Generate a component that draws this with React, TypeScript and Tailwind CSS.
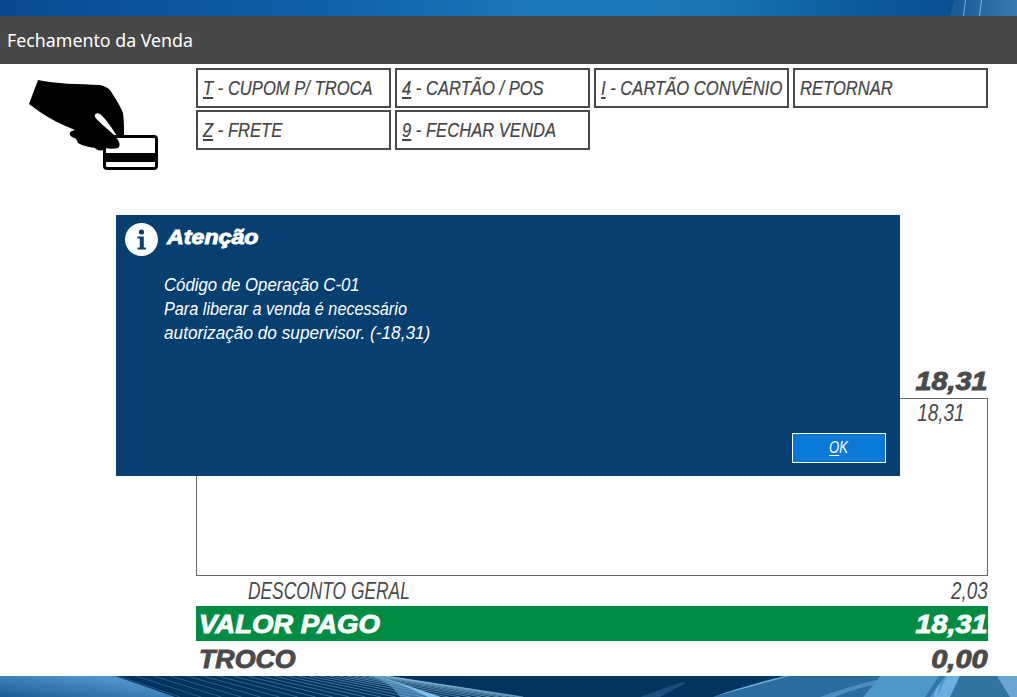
const light = "inline-block font-['Liberation_Sans',sans-serif] italic"
const heavy = "inline-block font-['Liberation_Sans',sans-serif] font-bold italic [-webkit-text-stroke:0.9px_currentColor]"

const ACTIONS = [
  { key: 'T', label: ' - CUPOM P/ TROCA' },
  { key: '4', label: ' - CARTÃO / POS' },
  { key: 'I', label: ' - CARTÃO CONVÊNIO' },
  { key: '', label: 'RETORNAR' },
  { key: 'Z', label: ' - FRETE' },
  { key: '9', label: ' - FECHAR VENDA' },
]

function HandCard() {
  return (
    <svg width="132" height="94" viewBox="28 78 132 94" className="shrink-0">
      <rect x="104.5" y="136.5" width="52" height="32" rx="2.5" fill="#fff" stroke="#000" strokeWidth="3" />
      <rect x="104" y="153" width="53" height="9" fill="#000" />
      <path
        d="M38 80 C55 84 80 84 100 85 C105 86 108 88 110 90 C115 98 120 105 123 113 C124 120 124 128 124 136 L117 136 C112 128 105 118 100 114 C97 112 94 114 95 117 C101 125 112 131 118 140 C120 143 120 147 118 148 C114 149 110 149 105 148 L104 150 C100 151 96 150 95 148 C89 147 83 146 78 143 C77 140 76 138 72 137 C69 135 69 132 72 131 L75 130 C62 125 50 119 40 112 L29 104 Z"
        fill="#000"
      />
    </svg>
  )
}

function TopBand() {
  return (
    <div className="relative h-4 overflow-hidden bg-[linear-gradient(90deg,#084a92_0%,#0f5ea8_30%,#1a7abc_55%,#1875b3_70%,#0c5a9a_85%,#0a4f92_94%,#2a6fa8_100%)]">
      <svg width="1017" height="16" className="absolute left-0 top-0">
        <path d="M950 16 L954 0 L1017 0 L1017 16 Z" fill="#ffffff" opacity="0.07" />
        <path d="M963 16 L965 0 L966 0 L964 16 Z" fill="#9fd0ee" opacity="0.7" />
        <path d="M979 16 L981 0 L982 0 L980 16 Z" fill="#8cc4e6" opacity="0.8" />
      </svg>
    </div>
  )
}

function BottomBand() {
  const lines = Array.from({ length: 26 }, (_, i) => {
    // the mesh gets tighter going right
    const x = 118 + 268 * (1 - Math.pow(1 - i / 25, 1.7))
    return { x, run: 62 + i * 3, opacity: 0.3 + i * 0.02 }
  })
  return (
    <div className="h-[21px] overflow-hidden">
      <svg width="1017" height="21" viewBox="0 0 1017 21" className="block">
        <defs>
          <linearGradient id="bandLeft" x1="0" x2="1" y1="1" y2="0">
            <stop offset="0" stopColor="#1c5c96" />
            <stop offset="0.75" stopColor="#4f94c8" />
            <stop offset="1" stopColor="#4a8fc2" />
          </linearGradient>
          <linearGradient id="bandDark" x1="0" x2="1" y1="0" y2="0">
            <stop offset="0" stopColor="#02315f" />
            <stop offset="0.7" stopColor="#03335f" />
            <stop offset="1" stopColor="#0a4274" />
          </linearGradient>
        </defs>
        <rect width="1017" height="21" fill="url(#bandDark)" />
        <path d="M0 0 H115 L175 21 H0 Z" fill="url(#bandLeft)" />
        {lines.map(l => (
          <path
            key={l.x}
            d={`M${l.x} 0 L${l.x + l.run} 21`}
            stroke="#9ccbe8"
            strokeOpacity={l.opacity}
            strokeWidth="0.8"
            fill="none"
          />
        ))}
        <path d="M378 0 C400 7 420 14 441 21 L400 21 C395 12 385 5 370 0 Z" fill="#6db3e0" opacity="0.55" />
        <path d="M378 0 C400 7 420 14 441 21 L428 21 C412 13 397 6 376 0 Z" fill="#7cc0ea" />
        <path d="M640 21 L682 6 L686 7 L660 21 Z" fill="#2a608f" opacity="0.6" />
        <path d="M713 21 C740 14 765 7 790 0 L880 0 L863 21 Z" fill="#2b6b9e" />
        <path d="M713 21 C740 14 765 7 790 0 L785 0 C760 6 735 13 713 21 Z" fill="#63a8d8" />
        <path d="M820 21 C840 14 855 9 877 4 L877 8 C860 12 845 16 835 21 Z" fill="#4f8dbd" />
        <path d="M880 0 H1017 V21 H863 Z" fill="#4f97c9" />
        <path d="M934 21 L937 21 L942 0 L938 0 Z M937 21 L950 21 L960 0 L947 0 Z" fill="#6cb0de" />
        <path d="M925 21 L939 0 L945 0 L930 21 Z" fill="#2f76a8" />
        <path d="M950 21 L960 0 H1017 V21 Z" fill="#32739f" />
        <path d="M997 0 H1017 V21 H1010 Z" fill="#6aa6d0" />
      </svg>
    </div>
  )
}

function AttentionDialog() {
  return (
    <div className="absolute left-[116px] top-[215px] flex h-[261px] w-[784px] flex-col bg-[#063f70] text-white">
      <div className="flex h-[47px] items-center gap-[9px] pl-[9px]">
        <svg width="33" height="33" viewBox="0 0 33 33" className="mt-[1px]">
          <circle cx="16.5" cy="16.5" r="16.5" fill="#fff" />
          <circle cx="16.5" cy="9" r="2.6" fill="#063f70" />
          <path d="M12.5 13.5 H18.8 V24.5 H21 V26.5 H12.5 V24.5 H14.8 V15.5 H12.5 Z" fill="#063f70" />
        </svg>
        <span className={`${heavy} mb-[4px] origin-left scale-x-[1.16] text-[20px] leading-none`}>Atenção</span>
      </div>
      <div className="ml-[48px] mt-[11px] flex flex-col items-start text-[19px] leading-[24px]">
        <span className={`${light} origin-left scale-x-[0.882]`}>Código de Operação C-01</span>
        <span className={`${light} origin-left scale-x-[0.855]`}>Para liberar a venda é necessário</span>
        <span className={`${light} origin-left scale-x-[0.906]`}>autorização do supervisor. (-18,31)</span>
      </div>
      <div className="mb-[13px] mr-[14px] mt-auto flex justify-end">
        <button className="flex h-[30px] w-[94px] items-center justify-center border border-white bg-[#0a78d6] text-[16px] text-white">
          <span className={`${light} scale-x-[0.82]`}>
            <span className="underline underline-offset-2">O</span>K
          </span>
        </button>
      </div>
    </div>
  )
}

export default function App() {
  return (
    <div className="relative flex h-[697px] w-[1017px] flex-col overflow-hidden bg-white font-['Liberation_Sans',sans-serif]">
      <TopBand />
      <div className="flex h-12 items-center bg-[#474747] pl-[7px] font-['Noto_Sans',sans-serif] text-[17.8px] text-white">
        Fechamento da Venda
      </div>

      <div className="flex flex-1 pr-[29px]">
        <div className="w-[196px] pl-[28px] pt-[14px]">
          <HandCard />
        </div>
        <div className="flex min-w-0 flex-1 flex-col">
          <div className="mt-1 grid grid-cols-4 gap-x-1 gap-y-[2px]">
            {ACTIONS.map(a => (
              <button
                key={a.label}
                className="flex h-10 items-center overflow-hidden whitespace-pre border-2 border-[#4a4a4a] pl-[5px] text-left text-[21px] text-[#444444]"
              >
                <span className={`${light} origin-left scale-x-[0.79] [-webkit-text-stroke:0.2px_currentColor]`}>
                  {a.key && <span className="underline underline-offset-2">{a.key}</span>}
                  {a.label}
                </span>
              </button>
            ))}
          </div>

          <div className="mt-[217px] flex h-[31px] items-center justify-end pb-[2px] text-[25px] text-[#4a4a4a]">
            <span className={`${heavy} origin-right scale-x-[1.15]`}>18,31</span>
          </div>
          <div className="flex h-[178px] justify-end border border-[#666666] pr-[22px]">
            <span className={`${light} mt-[1px] h-[26px] origin-right scale-x-[0.82] text-[23px] leading-[26px] text-[#4a4a4a]`}>18,31</span>
          </div>
          <div className="mt-[2px] flex h-[26px] items-center justify-between pl-[52px] text-[23px] text-[#4a4a4a]">
            <span className={`${light} origin-left scale-x-[0.755]`}>DESCONTO GERAL</span>
            <span className={`${light} origin-right scale-x-[0.82]`}>2,03</span>
          </div>
          <div className="mt-[2px] flex h-[35px] items-center justify-between bg-[#008c43] pl-[3px] text-[25px] leading-none text-white">
            <span className={`${heavy} mt-[1px] origin-left scale-x-[1.1]`}>VALOR PAGO</span>
            <span className={`${heavy} mt-[1px] origin-right scale-x-[1.15]`}>18,31</span>
          </div>
          <div className="flex h-[35px] items-center justify-between pl-[3px] text-[25px] leading-none text-[#4a4a4a]">
            <span className={`${heavy} mt-[1px] origin-left scale-x-[1.07]`}>TROCO</span>
            <span className={`${heavy} mt-[1px] origin-right scale-x-[1.16]`}>0,00</span>
          </div>
        </div>
      </div>

      <BottomBand />
      <AttentionDialog />
    </div>
  )
}
